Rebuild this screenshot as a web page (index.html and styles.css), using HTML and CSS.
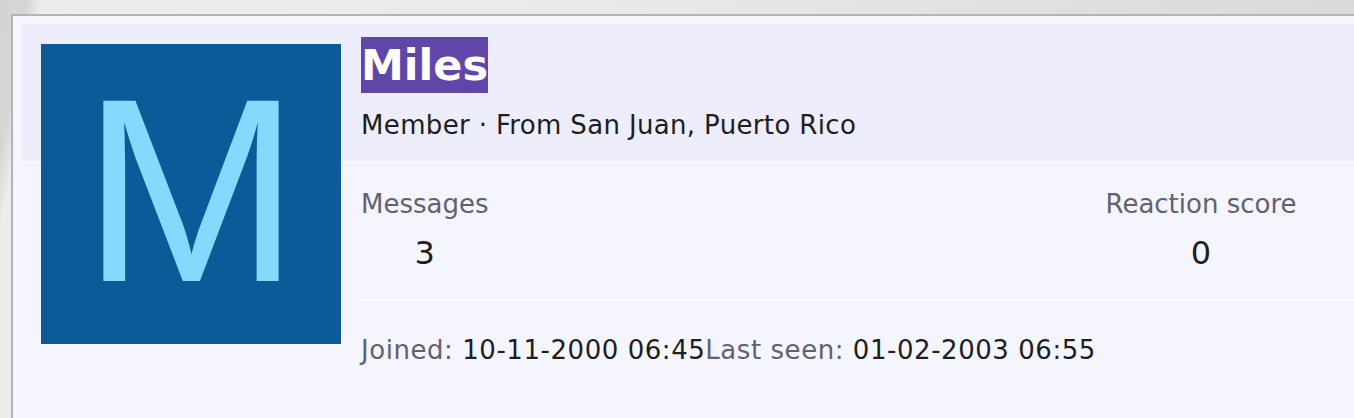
FILE: index.html
```html
<!DOCTYPE html>
<html lang="en">
  <head>
    <meta charset="UTF-8" />
    <title>Miles</title>
    <link rel="stylesheet" href="styles.css">
  </head>
  <body>
    <div class="member-card">
      <!-- Header band with avatar and name -->
      <div class="member-header">
        <div class="avatar">M</div>
        <div class="member-info">
          <h1 class="username"><span class="username-badge">Miles</span></h1>
          <div class="member-blurb">Member · From San Juan, Puerto Rico</div>
        </div>
      </div>

      <!-- Stats and dates -->
      <div class="member-body">
        <div class="stats">
          <dl class="stat">
            <dt>Messages</dt>
            <dd>3</dd>
          </dl>
          <dl class="stat">
            <dt>Reaction score</dt>
            <dd>0</dd>
          </dl>
        </div>
        <div class="dates">
          <span class="date-label">Joined:</span> <span class="date-value">10-11-2000 06:45</span><span class="date-label">Last seen:</span> <span class="date-value">01-02-2003 06:55</span>
        </div>
      </div>
    </div>
  </body>
</html>
```

FILE: styles.css
```css
html,
body {
  height: 100%;
}

body {
  margin: 0;
  padding: 14px 0 0 11px;
  box-sizing: border-box;
  display: flex;
  flex-direction: column;
  overflow: hidden;
  font-family: "DejaVu Sans", Verdana, sans-serif;
  background: linear-gradient(
    100deg,
    #d4d4d4 0,
    #d6d6d6 28px,
    #ececec 40px,
    #ebebeb 500px,
    #d9d9d9 1354px
  );
}

.member-card {
  flex: 1;
  border-top: 2px solid #b4b4b6;
  border-left: 2px solid #b4b4b6;
  background: #f5f5fe;
  padding: 8px 0 0 8px;
}

.member-header {
  display: flex;
  gap: 20px;
  height: 137px;
  box-sizing: border-box;
  padding: 20px;
  background: #eeedfb;
}

.avatar {
  flex: none;
  width: 300px;
  height: 300px;
  box-sizing: border-box;
  padding-bottom: 6px;
  display: flex;
  align-items: center;
  justify-content: center;
  background: #0c5a97;
  color: #86d8fc;
  font-family: "Liberation Sans", Arial, sans-serif;
  font-size: 262px;
  line-height: 1;
}

.username {
  margin: -7px 0 0;
  font-size: 43px;
  font-weight: bold;
  line-height: 1;
}

.username-badge {
  display: inline-block;
  line-height: 56px;
  background: #6046a8;
  color: #fff;
}

.member-blurb {
  margin-top: 17px;
  font-size: 26px;
  letter-spacing: 0.35px;
  color: #1d1d22;
}

.member-body {
  padding-left: 340px;
}

.stats {
  display: flex;
  gap: 617px;
  padding: 24px 0 26px;
  border-bottom: 2px solid #fff;
}

.stat {
  margin: 0;
  text-align: center;
}

.stat dt {
  font-size: 26px;
  color: #63616f;
  line-height: 38px;
}

.stat dd {
  margin: 10px 0 0;
  font-size: 32px;
  color: #1d1d22;
  line-height: 40px;
}

.dates {
  padding-top: 34px;
  font-size: 26px;
  letter-spacing: 0.55px;
  color: #1d1d22;
}

.date-label {
  color: #63616f;
}
```
